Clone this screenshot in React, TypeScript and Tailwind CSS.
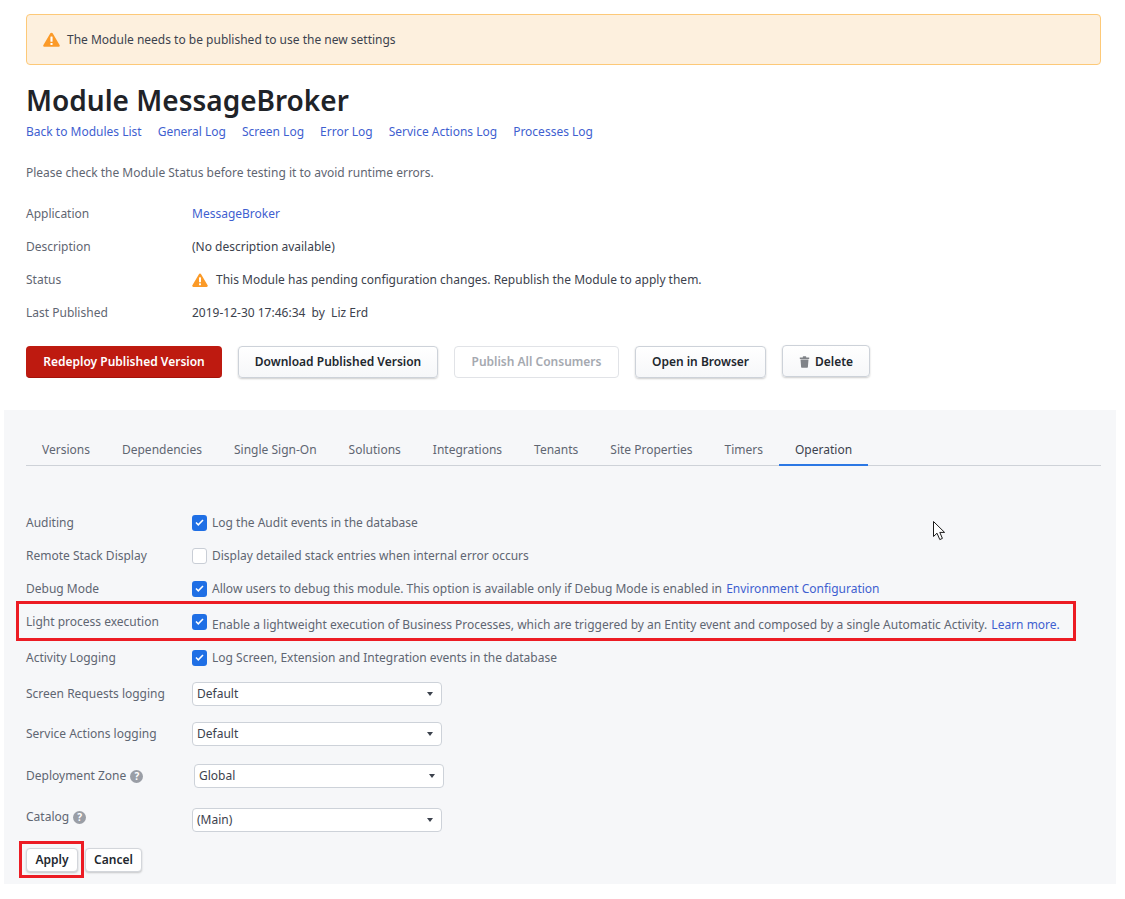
function Warn({ className }: { className: string }) {
  return (
    <svg viewBox="0 0 16 14" className={className}>
      <path d="M8 0.6c.5 0 .9.3 1.1.6l6.5 11c.5.8-.1 1.7-1 1.7H1.4c-.9 0-1.5-.9-1-1.7l6.5-11C7.1.9 7.5.6 8 .6z" fill="#fb9a28" />
      <rect x="7" y="4.2" width="2" height="5" rx="0.5" fill="#fff" />
      <rect x="7" y="10.2" width="2" height="2" rx="0.5" fill="#fff" />
    </svg>
  );
}

function Check({ on }: { on: boolean }) {
  if (!on) {
    return <span className="w-[15px] h-[16px] rounded-[3px] border border-[#c9ced6] bg-white shrink-0" />;
  }
  return (
    <span className="w-[15px] h-[16px] rounded-[3px] bg-[#1f6fe5] shrink-0 flex items-center justify-center">
      <svg viewBox="0 0 10 8" className="w-[9px] h-[7px]">
        <path d="M1 4l2.6 2.6L9 1.2" fill="none" stroke="#fff" strokeWidth="1.8" />
      </svg>
    </span>
  );
}

function Help() {
  return (
    <span className="w-[13px] h-[13px] rounded-full bg-[#9a9ea6] text-white text-[10px] font-bold leading-[13px] text-center">?</span>
  );
}

function Select({ value, label, help, rowClass, boxClass, labelClass }: { value: string; label: string; help?: boolean; rowClass: string; boxClass: string; labelClass?: string }) {
  return (
    <div className={`flex items-center ${rowClass}`}>
      <div className={`w-[166px] flex items-center gap-[4px] text-[#5f6672] ${labelClass ?? ''}`}>
        {label}
        {help && <Help />}
      </div>
      <div className={`w-[250px] h-[24px] bg-white border border-[#cdd2d9] rounded-[4px] flex items-center justify-between pl-[4px] pr-[8px] text-[#3c424d] ${boxClass}`}>
        {value}
        <span className="w-0 h-0 border-x-[3.5px] border-x-transparent border-t-[4px] border-t-[#3c424d]" />
      </div>
    </div>
  );
}

function CheckRow({ label, on, textClass, children }: { label: string; on: boolean; textClass?: string; children: React.ReactNode }) {
  return (
    <div className="flex items-center h-[33px]">
      <div className="w-[166px] text-[#5f6672]">{label}</div>
      <Check on={on} />
      <div className={`ml-[5px] text-[#5f6672] ${textClass ?? ''}`}>{children}</div>
    </div>
  );
}

const infoRows = [
  ['Application', <a className="text-[#3f5fd0]">MessageBroker</a>],
  ['Description', <span className="text-[#3c424d]">(No description available)</span>],
  ['Status', (
    <span className="flex items-center gap-[8px] text-[#3c424d]">
      <Warn className="w-[16px] h-[14px]" />
      This Module has pending configuration changes. Republish the Module to apply them.
    </span>
  )],
  ['Last Published', <span className="text-[#3c424d] whitespace-pre">2019-12-30 17:46:34  by  Liz Erd</span>],
] as const;

const links = ['Back to Modules List', 'General Log', 'Screen Log', 'Error Log', 'Service Actions Log', 'Processes Log'];
const tabs = ['Versions', 'Dependencies', 'Single Sign-On', 'Solutions', 'Integrations', 'Tenants', 'Site Properties', 'Timers', 'Operation'];

const btn = 'h-[32px] rounded-[4px] border border-[#cdd2d9] bg-linear-to-b from-white to-[#f6f7f9] text-[#22272e] font-semibold shadow-[0_1px_2px_rgba(0,0,0,0.2)] flex items-center justify-center';

export default function App() {
  return (
    <div className="relative w-[1125px] h-[899px] bg-white overflow-hidden font-['Noto_Sans','Open_Sans',sans-serif] text-[12px] leading-[16px]">
      <div className="pt-[14px] px-[26px] w-[1127px]">
        {/* Banner */}
        <div className="w-[1075px] h-[51px] rounded-[4px] border border-[#fdc978] bg-[#fdf0de] flex items-center pl-[16px] gap-[7px] text-[#3c424d]">
          <Warn className="w-[17px] h-[15px]" />
          The Module needs to be published to use the new settings
        </div>

        <h1 className="mt-[17px] text-[28px] leading-[36px] font-semibold text-[#1f2328]">Module MessageBroker</h1>

        <div className="mt-[6px] flex gap-[16px] text-[#3f5fd0]">
          {links.map((l) => <a key={l}>{l}</a>)}
        </div>

        <p className="mt-[25px] text-[#5f6672]">Please check the Module Status before testing it to avoid runtime errors.</p>

        <div className="mt-[16px]">
          {infoRows.map(([label, val]) => (
            <div key={label} className="flex items-center h-[33px]">
              <div className="w-[166px] text-[#5f6672]">{label}</div>
              {val}
            </div>
          ))}
        </div>

        <div className="mt-[17px] flex gap-[16px]">
          <button className="h-[32px] w-[196px] rounded-[4px] bg-[#be1a10] text-white font-semibold border-b border-[#a31209]">Redeploy Published Version</button>
          <button className={`${btn} w-[200px]`}>Download Published Version</button>
          <button className="h-[32px] w-[165px] rounded-[4px] border border-[#e1e3e7] bg-white text-[#a5a9b0] font-semibold">Publish All Consumers</button>
          <button className={`${btn} w-[131px]`}>Open in Browser</button>
          <button className={`${btn} w-[88px] gap-[5px] -mt-[1px] pt-[1px]`}>
            <svg viewBox="0 0 10 12" className="w-[11px] h-[12px]">
              <path d="M0.3 1.6h3V0.8q0-.5.5-.5h2.4q.5 0 .5.5v.8h3v1.3H0.3zM1 3.6h8L8.4 11q0 .7-.7.7H2.3q-.7 0-.7-.7z" fill="#808388" />
            </svg>
            Delete
          </button>
        </div>
      </div>

      {/* Settings panel */}
      <div className="mt-[32px] ml-[4px] w-[1112px] h-[474px] bg-[#f6f7f9] px-[22px]">
        <div className="pt-[32px] w-[1075px] h-[56px] flex border-b border-[#ced2d8] text-[#5f6672]">
          {tabs.map((t) => (
            <div
              key={t}
              className={t === 'Operation'
                ? 'px-[16px] h-[24px] leading-[16px] text-[#3c424d] border-b-2 border-[#2b78e4]'
                : 'px-[16px] h-[24px] leading-[16px]'}
            >
              {t}
            </div>
          ))}
        </div>

        <div className="mt-[40px]">
          <CheckRow label="Auditing" on>Log the Audit events in the database</CheckRow>
          <CheckRow label="Remote Stack Display" on={false}>Display detailed stack entries when internal error occurs</CheckRow>
          <CheckRow label="Debug Mode" on>
            Allow users to debug this module. This option is available only if Debug Mode is enabled in <a className="ml-[1px] text-[#3f5fd0]">Environment Configuration</a>
          </CheckRow>
          <CheckRow label="Light process execution" on textClass="mt-[6px]">
            Enable a lightweight execution of Business Processes, which are triggered by an Entity event and composed by a single Automatic Activity. <a className="ml-[1px] text-[#3f5fd0]">Learn more.</a>
          </CheckRow>
          <div className="mt-[3px]">
            <CheckRow label="Activity Logging" on>Log Screen, Extension and Integration events in the database</CheckRow>
          </div>
        </div>

        <Select label="Screen Requests logging" value="Default" rowClass="mt-[8px]" boxClass="" />
        <Select label="Service Actions logging" value="Default" rowClass="mt-[16px]" boxClass="" />
        <Select label="Deployment Zone" help value="Global" rowClass="mt-[18px]" boxClass="ml-[2px]" />
        <Select label="Catalog" help value="(Main)" rowClass="mt-[20px]" boxClass="" labelClass="mb-[6px]" />

        <div className="mt-[16px] flex gap-[7px]">
          <button className="h-[24px] w-[52px] rounded-[4px] border border-[#d3d6db] bg-white text-[#22272e] font-semibold shadow-[0_1px_2px_rgba(0,0,0,0.2)]">Apply</button>
          <button className="h-[24px] w-[57px] rounded-[4px] border border-[#d3d6db] bg-white text-[#22272e] font-semibold shadow-[0_1px_2px_rgba(0,0,0,0.2)]">Cancel</button>
        </div>
      </div>

      {/* Annotations over the screenshot */}
      <div className="absolute left-[16px] top-[601px] w-[1060px] h-[40px] border-[3px] border-[#ec1c24]" />
      <div className="absolute left-[19px] top-[841px] w-[65px] h-[37px] border-[3px] border-[#ec1c24]" />
      <svg viewBox="0 0 13 20" className="absolute left-[933px] top-[521px] w-[13px] h-[20px]">
        <path d="M0.5 0.5V15.5L4 12.2L6.8 18.6L9.4 17.4L6.8 11.4H11.6Z" fill="#fff" stroke="#1a1a1a" strokeWidth="1" />
      </svg>
    </div>
  );
}
